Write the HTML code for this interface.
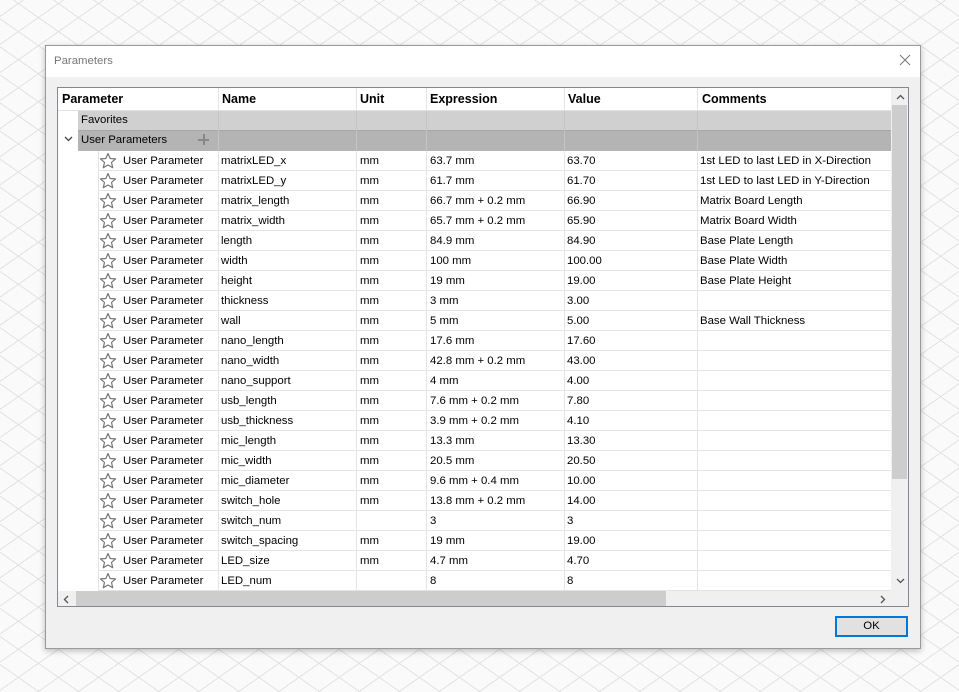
<!DOCTYPE html>
<html><head><meta charset="utf-8"><style>
*{margin:0;padding:0;box-sizing:border-box}
body{width:959px;height:692px;overflow:hidden;position:relative;font-family:"Liberation Sans",Tahoma,sans-serif;font-size:11.4px;color:#000;
background-color:#fafafa;
background-image:repeating-linear-gradient(35deg,transparent 0 22px,#e2e2e2 22px 23px),repeating-linear-gradient(-35deg,transparent 0 22px,#e2e2e2 22px 23px);}
.dlg{position:absolute;left:45px;top:45px;width:876px;height:604px;background:#f0f0f0;border:1px solid #9a9a9a;box-shadow:0 2px 6px rgba(0,0,0,.25)}
.title{position:absolute;left:0;top:0;width:100%;height:31px;background:#fff;color:#777;padding:9px 0 0 8px;font-size:11.4px}
.x{position:absolute;right:9px;top:8px}
.tbl{position:absolute;left:57px;top:87px;width:852px;height:520px;border:1px solid #828790;background:#fff;overflow:hidden}
.a{position:absolute;white-space:nowrap}
.ok{position:absolute;left:835px;top:616px;width:73px;height:21px;border:2px solid #0078d7;background:#e1e1e1;text-align:center;line-height:17px;font-size:11.4px}
</style></head><body>
<div class="dlg"><div class="title">Parameters</div><svg class="x" width="12" height="12" viewBox="0 0 12 12"><path d="M1 1L11 11M11 1L1 11" stroke="#777" stroke-width="1"/></svg></div>
<div class="tbl" id="t"></div>
<div class="ok">OK</div>
<script>
var t=document.getElementById('t');var h='';
function A(x,y,s,st){h+='<div class="a" style="left:'+(x-58)+'px;top:'+(y-88)+'px;'+(st||'')+'">'+s+'</div>';}
function R(x,y,w,hh,c){h+='<div class="a" style="left:'+(x-58)+'px;top:'+(y-88)+'px;width:'+w+'px;height:'+hh+'px;background:'+c+'"></div>';}
var cols=[218,356,426,564,697,891];
R(78,111,813,20,'#d0d0d0');R(78,131,813,20,'#b4b4b4');
R(58,110,833,1,'#e0e0e0');R(78,130,813,1,'#a8a8a8');
var hd=['Parameter','Name','Unit','Expression','Value','Comments'],hx=[62,222,360,430,568,702];
for(var i=0;i<6;i++)A(hx[i],92,hd[i],'font-weight:bold;font-size:12.5px');
for(var i=0;i<cols.length-1;i++){R(cols[i],88,1,22,'#e4e4e4');R(cols[i],111,1,40,'#c4c4c4');R(cols[i],151,1,440,'#e4e4e4');}
R(98,151,1,440,'#e4e4e4');
A(81,114,'Favorites');A(81,134,'User Parameters');
R(198,139,11,1.5,'#888');R(203,134,1.5,11,'#888');
h+='<svg class="a" style="left:6px;top:48px" width="9" height="6" viewBox="0 0 9 6"><path d="M1 1l3.5 3.5L8 1" fill="none" stroke="#444" stroke-width="1.3"/></svg>';
var d=[['matrixLED_x','mm','63.7 mm','63.70','1st LED to last LED in X-Direction'],['matrixLED_y','mm','61.7 mm','61.70','1st LED to last LED in Y-Direction'],['matrix_length','mm','66.7 mm + 0.2 mm','66.90','Matrix Board Length'],['matrix_width','mm','65.7 mm + 0.2 mm','65.90','Matrix Board Width'],['length','mm','84.9 mm','84.90','Base Plate Length'],['width','mm','100 mm','100.00','Base Plate Width'],['height','mm','19 mm','19.00','Base Plate Height'],['thickness','mm','3 mm','3.00',''],['wall','mm','5 mm','5.00','Base Wall Thickness'],['nano_length','mm','17.6 mm','17.60',''],['nano_width','mm','42.8 mm + 0.2 mm','43.00',''],['nano_support','mm','4 mm','4.00',''],['usb_length','mm','7.6 mm + 0.2 mm','7.80',''],['usb_thickness','mm','3.9 mm + 0.2 mm','4.10',''],['mic_length','mm','13.3 mm','13.30',''],['mic_width','mm','20.5 mm','20.50',''],['mic_diameter','mm','9.6 mm + 0.4 mm','10.00',''],['switch_hole','mm','13.8 mm + 0.2 mm','14.00',''],['switch_num','','3','3',''],['switch_spacing','mm','19 mm','19.00',''],['LED_size','mm','4.7 mm','4.70',''],['LED_num','','8','8','']];
var star='<svg width="18" height="18" viewBox="0 0 18 18"><path d="M9 1.5l2.2 5 5.3.4-4 3.5 1.2 5.3L9 13l-4.7 2.7 1.2-5.3-4-3.5 5.3-.4z" fill="none" stroke="#777" stroke-width="1.2" stroke-linejoin="round"/></svg>';
for(var r=0;r<d.length;r++){var y=151+r*20;R(98,y+19,793,1,'#e4e4e4');
A(99,y+1,star);A(123,y+4,'User Parameter');A(221,y+4,d[r][0]);A(360,y+4,d[r][1]);A(430,y+4,d[r][2]);A(567,y+4,d[r][3]);A(700,y+4,d[r][4]);}
R(891,88,18,503,'#f0f0f0');R(892,105,15,374,'#cdcdcd');
h+='<svg class="a" style="left:838px;top:6px" width="9" height="6" viewBox="0 0 9 6"><path d="M1 5l3.5-3.5L8 5" fill="none" stroke="#555" stroke-width="1.3"/></svg>';
h+='<svg class="a" style="left:838px;top:490px" width="9" height="6" viewBox="0 0 9 6"><path d="M1 1l3.5 3.5L8 1" fill="none" stroke="#555" stroke-width="1.3"/></svg>';
R(58,591,851,16,'#f0f0f0');R(76,591,590,15,'#cdcdcd');
h+='<svg class="a" style="left:5px;top:507px" width="6" height="9" viewBox="0 0 6 9"><path d="M5 1L1.5 4.5 5 8" fill="none" stroke="#555" stroke-width="1.3"/></svg>';
h+='<svg class="a" style="left:822px;top:507px" width="6" height="9" viewBox="0 0 6 9"><path d="M1 1l3.5 3.5L1 8" fill="none" stroke="#555" stroke-width="1.3"/></svg>';
t.innerHTML=h;
</script>
</body></html>
